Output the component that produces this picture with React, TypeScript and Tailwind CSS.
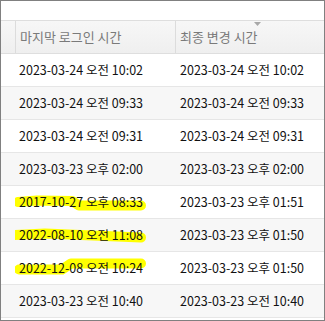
const rows = [
  { login: '2023-03-24 오전 10:02', changed: '2023-03-24 오전 10:02' },
  { login: '2023-03-24 오전 09:33', changed: '2023-03-24 오전 09:33' },
  { login: '2023-03-24 오전 09:31', changed: '2023-03-24 오전 09:31' },
  { login: '2023-03-23 오후 02:00', changed: '2023-03-23 오후 02:00' },
  { login: '2017-10-27 오후 08:33', changed: '2023-03-23 오후 01:51', mark: 'M3 16 L22 14.5 L57 15 L64 19.5 L126 19.5' },
  { login: '2022-08-10 오전 11:08', changed: '2023-03-23 오후 01:50', mark: 'M-2 16 L30 14.5 L126 18.5' },
  { login: '2022-12-08 오전 10:24', changed: '2023-03-23 오후 01:50', mark: 'M4 17.5 L47 17.5 L56 11.5 L126 11.5' },
  { login: '2023-03-23 오전 10:40', changed: '2023-03-23 오전 10:40' },
];

export default function App() {
  return (
    <div className="w-[325px] h-[321px] border border-[#808080] bg-white font-['Noto_Sans_CJK_KR',sans-serif] text-[12.5px] overflow-hidden">
      <div className="h-[19px]" />
      {/* header */}
      <div className="flex h-[34px] border-y border-[#dedede] bg-gradient-to-b from-[#f7f7f7] to-[#efefef] text-[#7a7a7a] text-[13px]">
        <div className="w-[14px]" />
        <div className="w-[160px] border-l border-[#dcdcdc] pl-[4px] flex items-center">마지막 로그인 시간</div>
        <div className="relative flex-1 border-l border-[#dcdcdc] pl-[4px] flex items-center">
          <span>최종 변경 시간</span>
          <svg className="absolute left-[78px] top-[1px]" width="7" height="4" viewBox="0 0 7 4">
            <path d="M0 0 L7 0 L3.5 4 Z" fill="#a8a8a8" />
          </svg>
        </div>
      </div>
      {rows.map((r, i) => (
        <div
          key={i}
          className={`flex h-[33px] border-b border-[#e6e6e6] text-[#111] ${i % 2 === 1 ? 'bg-[#f7f7f7]' : 'bg-white'}`}
        >
          <div className="w-[14px]" />
          <div className="relative w-[161px] pl-[4px] flex items-center">
            {r.mark && (
              <svg className="absolute left-0 top-0" width="160" height="33" viewBox="0 0 160 33">
                <path d={r.mark} stroke="#ffff00" strokeWidth="10" strokeLinecap="round" strokeLinejoin="round" fill="none" />
              </svg>
            )}
            <span className="relative">{r.login}</span>
          </div>
          <div className="flex-1 pl-[4px] flex items-center">{r.changed}</div>
        </div>
      ))}
    </div>
  );
}
